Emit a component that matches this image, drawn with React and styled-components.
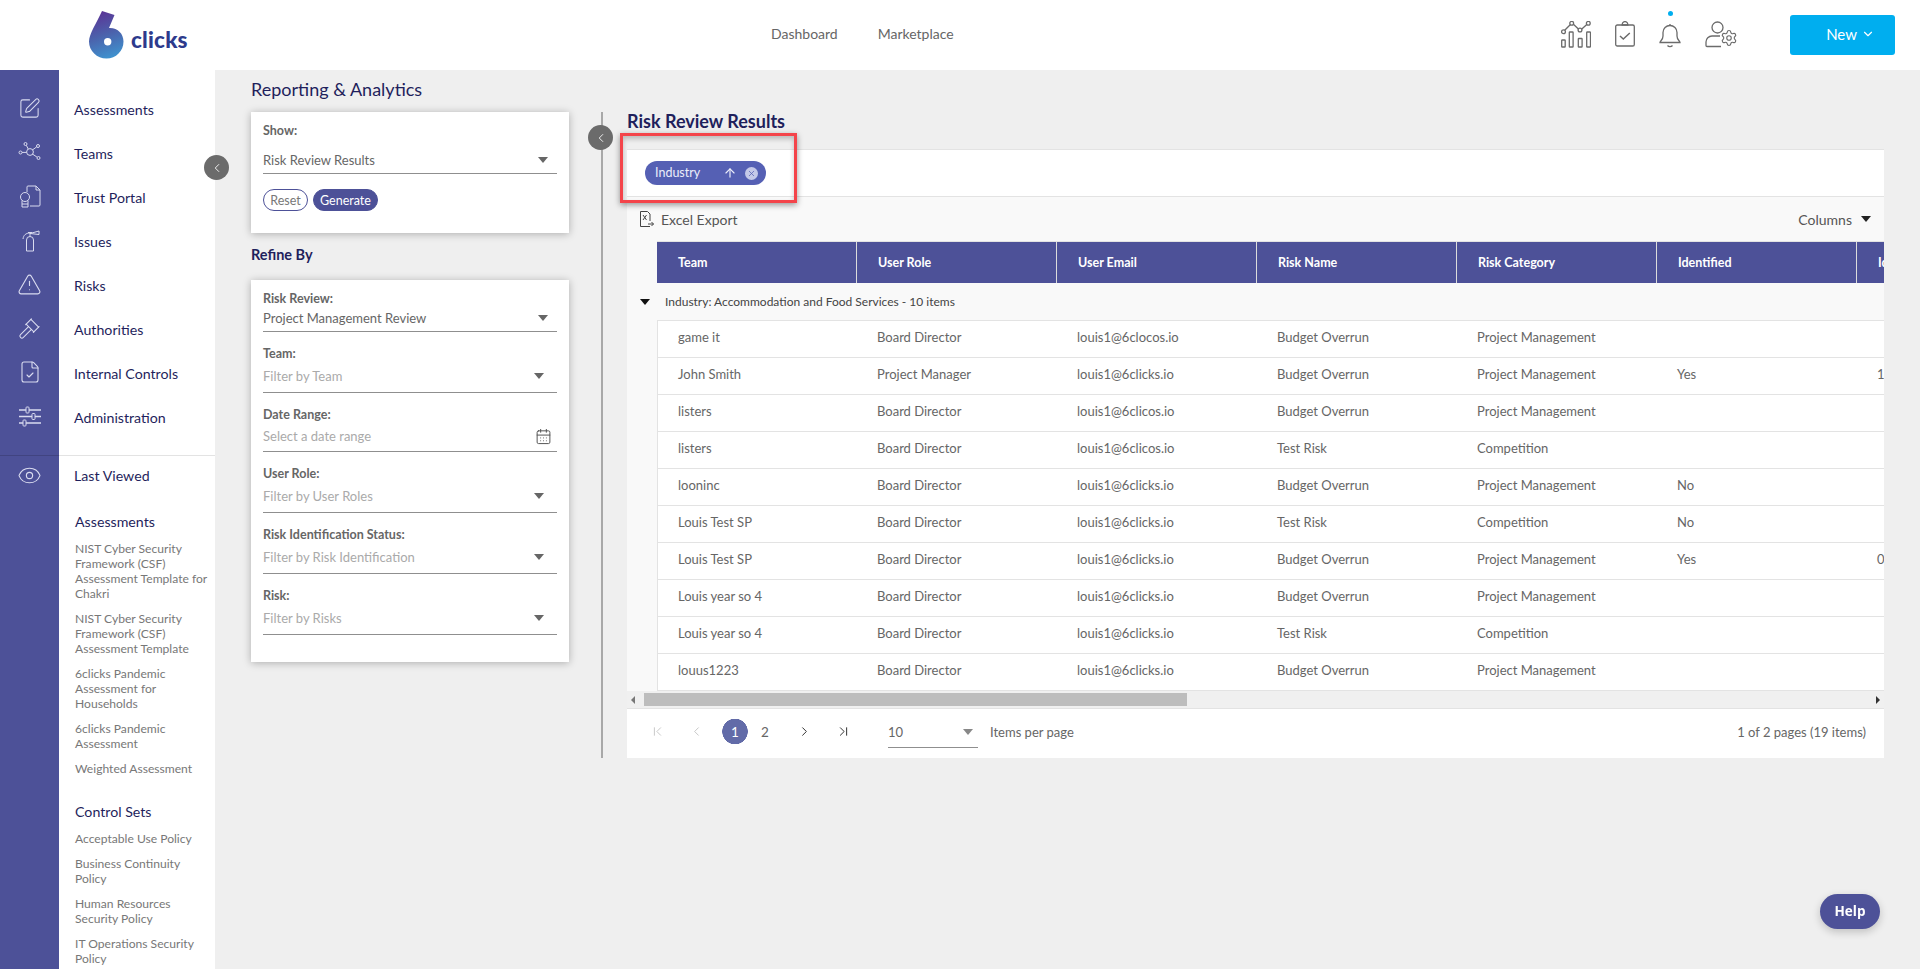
import React from 'react'
import styled, { createGlobalStyle } from 'styled-components'
import {
  SquarePen, TriangleAlert, Gavel, FileCheck, Eye,
  ChevronLeft, ChevronRight, ChevronFirst, ChevronLast, ChevronDown, CalendarDays,
  ArrowUp, X, Settings,
} from 'lucide-react'

const purple = '#4d5198'
const navy = '#1f1f5c'

const GlobalStyle = createGlobalStyle`
  html, body { margin: 0; padding: 0; }
  body { font-family: Lato, "Open Sans", sans-serif; background: #efefef; color: #666; }
  * { box-sizing: border-box; }
`

const Page = styled.div`
  height: 969px;
  overflow: hidden;
  display: flex;
  flex-direction: column;
`

const Header = styled.header`
  height: 70px;
  flex: none;
  background: #fff;
  display: flex;
  align-items: center;
  padding: 0 25px 0 89px;
`
const Logo = styled.div`
  width: 100px;
  display: flex;
  align-items: flex-end;
  gap: 7px;
  height: 48px;
  svg { flex: none; }
`
const LogoText = styled.span`
  font-weight: 900;
  font-size: 22.5px;
  line-height: 26px;
  letter-spacing: 0.2px;
  color: #2d3a8c;
  margin-bottom: 6px;
`
const TopNav = styled.nav`
  display: flex;
  gap: 40px;
  margin: 0 0 4px 582px;
  a { font-size: 14px; color: #666; }
`
const TopTools = styled.div`
  margin-left: auto;
  display: flex;
  align-items: center;
  gap: 24px;
  color: #6b6b6b;
  > svg { margin-top: -2px; }
`
const BellWrap = styled.div`
  position: relative;
  display: flex;
  &::before {
    content: '';
    position: absolute;
    left: 9px;
    top: -12px;
    width: 5px;
    height: 5px;
    border-radius: 50%;
    background: #00aeef;
  }
`
const NewButton = styled.button`
  width: 105px;
  height: 40px;
  margin-left: 28px;
  border: 0;
  border-radius: 3px;
  background: #00aeef;
  color: #fff;
  font: 400 15px Lato, sans-serif;
  display: flex;
  align-items: center;
  justify-content: flex-end;
  gap: 4px;
  padding: 0 20px 2px 0;
`

const Body = styled.div`
  flex: 1;
  display: flex;
  min-height: 0;
`

const Rail = styled.aside`
  width: 59px;
  flex: none;
  background: ${purple};
  color: #d9dbef;
  padding-top: 16px;
`
const RailSlot = styled.div`
  height: ${(p) => p.$h || 44}px;
  display: flex;
  align-items: center;
  justify-content: center;
`
const RailDivider = styled.div`
  height: 1px;
  margin-top: 17px;
  background: rgba(0, 0, 0, 0.15);
`

const NavPanel = styled.div`
  position: relative;
  width: 156px;
  flex: none;
  background: #fff;
  padding-top: 17px;
`
const NavItem = styled.a`
  height: 44px;
  display: flex;
  align-items: center;
  padding-left: 15px;
  font-size: 14.2px;
  color: ${navy};
`
const NavDivider = styled.div`
  height: 1px;
  margin-top: 16px;
  background: #e3e3e3;
`
const LastViewed = styled(NavItem)`
  height: 38px;
`
const RecentGroup = styled.div`
  padding: 0 6px 0 16px;
  margin-top: ${(p) => p.$top}px;
`
const RecentTitle = styled.div`
  font-size: 14.2px;
  line-height: 18px;
  color: ${navy};
  margin-bottom: 10px;
`
const RecentLink = styled.a`
  display: block;
  font-size: 12.1px;
  line-height: 15px;
  color: #777;
  margin-bottom: 10px;
`

const Collapse = styled.button`
  position: absolute;
  top: ${(p) => p.$top}px;
  ${(p) => (p.$side === 'nav' ? 'right: -14px;' : 'left: -13px;')}
  width: 25px;
  height: 25px;
  padding: 0;
  border: 0;
  border-radius: 50%;
  background: #6b6b6b;
  color: #fff;
  display: flex;
  align-items: center;
  justify-content: center;
  z-index: 2;
`

const Main = styled.main`
  flex: 1;
  min-width: 0;
  display: flex;
  align-items: flex-start;
`

const FilterColumn = styled.section`
  width: 318px;
  margin-left: 36px;
  flex: none;
`
const PageTitle = styled.h1`
  margin: 0;
  height: 42px;
  line-height: 38px;
  font-size: 18px;
  font-weight: 400;
  color: ${navy};
`
const Card = styled.div`
  background: #fff;
  padding: 10px 12px ${(p) => p.$bottom}px;
  box-shadow: 0 1px 8px rgba(0, 0, 0, 0.28);
`
const SubTitle = styled.h2`
  margin: 0;
  height: 47px;
  line-height: 44px;
  font-size: 14.5px;
  font-weight: 700;
  color: ${navy};
`
const Field = styled.div`
  margin-top: 13px;
  &:first-child { margin-top: 0; }
`
const FieldLabel = styled.div`
  height: 18px;
  line-height: 18px;
  font-size: 12.5px;
  font-weight: 700;
  color: #666;
`
const FieldInput = styled.div`
  height: ${(p) => p.$h}px;
  display: flex;
  align-items: center;
  justify-content: space-between;
  border-bottom: 1px solid #8f8f8f;
  font-size: 13px;
  color: ${(p) => (p.$empty ? '#aaa' : '#666')};
  padding: 0 ${(p) => (p.$empty ? 13 : 9)}px 3px 0;
  ${(p) => p.$gap && `margin-top: ${p.$gap}px;`}
`
const Caret = styled.span`
  width: 0;
  height: 0;
  border-left: 5.5px solid transparent;
  border-right: 5.5px solid transparent;
  border-top: 6px solid ${(p) => p.$color || '#666'};
`
const DateIcon = styled(CalendarDays)`
  margin-right: -8px;
  color: #555;
`
const ButtonRow = styled.div`
  display: flex;
  gap: 5px;
  margin-top: 15px;
`
const Pill = styled.button`
  height: 22px;
  width: ${(p) => p.$w}px;
  padding: 0;
  border-radius: 11px;
  border: 1px solid ${purple};
  background: ${(p) => (p.$solid ? purple : '#fff')};
  color: ${(p) => (p.$solid ? '#fff' : '#777')};
  font: 400 12.5px Lato, sans-serif;
`

const Splitter = styled.div`
  position: relative;
  width: 2px;
  height: 646px;
  flex: none;
  margin: 42px 24px 0 32px;
  background: #a8a8a8;
`

const ResultPanel = styled.section`
  width: 1257px;
  flex: none;
  margin-top: 38px;
`
const ResultTitle = styled.h2`
  margin: 0 0 13px;
  height: 28px;
  line-height: 27px;
  font-size: 18px;
  font-weight: 700;
  color: ${navy};
`
const GroupBar = styled.div`
  position: relative;
  height: 48px;
  background: #fff;
  border-top: 1px solid #e3e3e3;
  border-bottom: 1px solid #e3e3e3;
  display: flex;
  align-items: center;
  padding-left: 18px;
`
const GroupChip = styled.div`
  width: 121px;
  height: 24px;
  border-radius: 12px;
  background: #5560b4;
  color: #eceefa;
  display: flex;
  align-items: center;
  padding: 0 8px 0 10px;
  font-size: 12.5px;
  span { flex: 1; margin-top: -2px; }
`
const ChipClose = styled.i`
  width: 13px;
  height: 13px;
  margin-left: 8px;
  border-radius: 50%;
  background: #c5c9e8;
  color: #5560b4;
  display: flex;
  align-items: center;
  justify-content: center;
`
const Highlight = styled.div`
  position: absolute;
  left: -7px;
  top: -17px;
  width: 177px;
  height: 70px;
  border: 3.5px solid #f4444a;
  box-shadow: 0 2px 6px rgba(0, 0, 0, 0.4), inset 0 3px 5px rgba(0, 0, 0, 0.22);
  pointer-events: none;
`
const Toolbar = styled.div`
  height: 44px;
  background: #f9f9f9;
  display: flex;
  align-items: center;
  padding: 0 13px 0 13px;
  font-size: 14px;
  color: #555;
`
const ExportButton = styled.div`
  display: flex;
  align-items: center;
  gap: 7px;
`
const ColumnsButton = styled.div`
  margin-left: auto;
  display: flex;
  align-items: center;
  gap: 9px;
`
const GridWrap = styled.div`
  overflow: hidden;
  background: #f9f9f9;
`
const HeadRow = styled.div`
  display: flex;
  height: 42px;
  margin-left: 30px;
  background: ${purple};
  border-top: 1px solid #e3e3e3;
`
const HeadCell = styled.div`
  flex: 0 0 200px;
  padding-left: 21px;
  display: flex;
  align-items: center;
  font-size: 12.5px;
  font-weight: 700;
  color: #fff;
  border-right: 1px solid #dcdcdc;
`
const GroupRow = styled.div`
  height: 37px;
  display: flex;
  align-items: center;
  gap: 15px;
  padding-left: 13px;
  font-size: 12px;
  color: #444;
`
const BodyRow = styled.div`
  display: flex;
  height: 37px;
  margin-left: 30px;
  width: 1600px;
  background: #fff;
  border-top: 1px solid #e3e3e3;
  &:last-child { border-bottom: 1px solid #e3e3e3; height: 38px; }
  border-left: 1px solid #e3e3e3;
`
const BodyCell = styled.div`
  flex: 0 0 200px;
  padding: 0 0 5px 20px;
  display: flex;
  align-items: center;
  font-size: 13px;
  color: #666;
  white-space: nowrap;
  &:first-child { flex-basis: 199px; }
`
const Scrollbar = styled.div`
  height: 17px;
  background: #f0f0f0;
  display: flex;
  align-items: center;
  padding: 0 4px;
`
const ScrollThumb = styled.div`
  width: 543px;
  height: 13px;
  margin-left: 9px;
  background: #bdbdbd;
`
const ScrollArrow = styled.span`
  width: 0;
  height: 0;
  border-top: 4px solid transparent;
  border-bottom: 4px solid transparent;
  ${(p) => (p.$dir === 'left'
    ? 'border-right: 4px solid #777;'
    : 'border-left: 4px solid #333; margin-left: auto;')}
`
const Pager = styled.div`
  height: 50px;
  background: #fff;
  border-top: 1px solid #e3e3e3;
  display: flex;
  align-items: center;
  padding: 0 18px 4px 11px;
  font-size: 13px;
  color: #666;
`
const PagerIcon = styled.span`
  width: 39px;
  display: flex;
  justify-content: center;
  color: ${(p) => (p.$off ? '#bbb' : '#333')};
`
const PageNumbers = styled.div`
  display: flex;
  margin: 0 5px 0 4px;
`
const PageNumber = styled.span`
  width: 30px;
  height: 25px;
  display: flex;
  align-items: center;
  justify-content: center;
  font-size: 13.5px;
  ${(p) => p.$active && `
    background: radial-gradient(circle at center, #626ba8 12.5px, transparent 13px);
    color: #fff;
  `}
`
const PageSize = styled.div`
  width: 90px;
  height: 30px;
  margin: 3px 0 0 25px;
  padding: 0 5px 2px 0;
  display: flex;
  align-items: center;
  justify-content: space-between;
  border-bottom: 1px solid #8f8f8f;
  color: #666;
`
const PageSizeLabel = styled.span`
  margin-left: 12px;
`
const PageInfo = styled.span`
  margin-left: auto;
`
const HelpButton = styled.button`
  position: fixed;
  left: 1820px;
  top: 894px;
  width: 60px;
  height: 35px;
  border: 0;
  border-radius: 18px;
  padding: 0 0 2px;
  background: ${purple};
  color: #fff;
  font: 700 13.5px "Open Sans", sans-serif;
  box-shadow: 0 3px 8px rgba(0, 0, 0, 0.2);
`

const ChartIcon = () => (
  <svg width="30" height="27" viewBox="0 0 30 27" fill="none" stroke="currentColor" strokeWidth="1.3">
    <rect x=".7" y="19" width="3.5" height="7" rx=".6" />
    <rect x="8.300" y="11" width="3.800" height="15" rx=".6" />
    <rect x="17.300" y="17.500" width="3.800" height="8.500" rx=".6" />
    <rect x="25.700" y="11" width="3.800" height="15" rx=".6" />
    <path d="M3.700 9.300 9.200 3.700M12.400 3.200 17.400 8M20.800 8l5-4.600" />
    <circle cx="2.500" cy="10.700" r="1.900" />
    <circle cx="10.700" cy="2.300" r="1.900" />
    <circle cx="19" cy="9" r="1.900" />
    <circle cx="27.300" cy="2.300" r="1.900" />
  </svg>
)
const ClipboardIcon = () => (
  <svg width="20" height="26" viewBox="0 0 20 26" fill="none" stroke="currentColor" strokeWidth="1.3">
    <rect x=".7" y="4" width="18.600" height="21" rx="1.600" />
    <path d="M6.500 4h7M7.400 4a2.700 2.700 0 1 1 5.200 0" />
    <path d="m5 15 3.300 3 6.500-6" strokeWidth="1.500" />
  </svg>
)
const BellIcon = () => (
  <svg width="22" height="25" viewBox="0 0 22 25" fill="none" stroke="currentColor" strokeWidth="1.300">
    <path d="M1 19.500c0-1.600 3-2.400 3-6.500V9.500a7 7 0 0 1 14 0V13c0 4.100 3 4.900 3 6.500z" />
    <path d="M11 2.500V1M8.500 22.500a3.200 3.200 0 0 0 5 0" />
  </svg>
)
const UserGearIcon = () => (
  <svg width="33" height="27" viewBox="0 0 33 27" fill="none" stroke="currentColor" strokeWidth="1.300">
    <circle cx="12.500" cy="6.500" r="5.500" />
    <path d="M16 25.500H2a1 1 0 0 1-1-1V21a6 6 0 0 1 6-6h8" />
    <Settings x={15} y={8} width={18} height={18} strokeWidth={1.5} />
  </svg>
)
const NetworkIcon = () => (
  <svg width="24" height="24" viewBox="0 0 24 24" fill="none" stroke="currentColor" strokeWidth="1">
    <circle cx="12" cy="12" r="3.400" />
    <circle cx="7.500" cy="4" r="1.500" />
    <circle cx="20" cy="6" r="1.500" />
    <circle cx="2.500" cy="12.500" r="1.500" />
    <circle cx="20.500" cy="18" r="1.500" />
    <path d="m8.300 5.300 2 3.800M18.700 6.900l-4.200 3M4 12.400h4.600M18.900 17l-4.500-3" />
  </svg>
)
const CertificateIcon = () => (
  <svg width="24" height="24" viewBox="0 0 24 24" fill="none" stroke="currentColor" strokeWidth="1">
    <path d="M9 8V3a1 1 0 0 1 1-1h8l4 4v15a1 1 0 0 1-1 1h-9" />
    <path d="M18 2v4h4" />
    <circle cx="7" cy="13" r="4.500" />
    <path d="M4 16.500V23h6v-6.500M4 20h6" />
  </svg>
)
const ExtinguisherIcon = () => (
  <svg width="24" height="24" viewBox="0 0 24 24" fill="none" stroke="currentColor" strokeWidth="1">
    <path d="M8.500 23V12a3.500 3.500 0 0 1 7 0v11z" />
    <path d="M12 8.500V5" />
    <path d="M12 5.500 21 3v3.500L12 5.500" />
    <path d="M12 5c-4 0-6.500 2-7 6" />
    <path d="M10 4.500h4" />
  </svg>
)
const SlidersIcon = () => (
  <svg width="24" height="24" viewBox="0 0 24 24" fill="none" stroke="currentColor" strokeWidth="1">
    <path d="M1 6h7M11 6h12M1 12.500h13M17 12.500h6M1 19h4M8 19h15" strokeWidth="1.300" />
    <rect x="8" y="3" width="3" height="6" rx=".8" />
    <rect x="14" y="9.500" width="3" height="6" rx=".8" />
    <rect x="5" y="16" width="3" height="6" rx=".8" />
  </svg>
)
const ExcelIcon = () => (
  <svg width="14" height="17" viewBox="0 0 14 17" fill="none" stroke="#444" strokeWidth="1">
    <path d="M10 10V3L7.500.5H.5v15H10" />
    <path d="m3 4 3.500 5M6.500 4 3 9" />
    <path d="M8 13h5.500M11.500 11l2 2-2 2" />
  </svg>
)
const LogoMark = () => (
  <svg width="35" height="49" viewBox="0 0 35 49">
    <defs>
      <linearGradient id="logoFill" x1="0.35" y1="0" x2="0.6" y2="1">
        <stop offset="0" stopColor="#5b3496" />
        <stop offset="0.5" stopColor="#4b62ac" />
        <stop offset="1" stopColor="#3f93cf" />
      </linearGradient>
    </defs>
    <path
      fillRule="evenodd"
      fill="url(#logoFill)"
      d="M13 1 25.500 5 20 18c8.500-.5 14.500 5.500 14.500 13.500C34.500 41 27 48.500 17.500 48.500S0 41 0 31.500C0 24 7 14 13 1ZM18.700 28a3.700 3.700 0 1 0 0 7.400 3.700 3.700 0 0 0 0-7.400Z"
    />
  </svg>
)

const navItems = ['Assessments', 'Teams', 'Trust Portal', 'Issues', 'Risks', 'Authorities', 'Internal Controls', 'Administration']
const railIcons = [
  <SquarePen key="a" size={23} strokeWidth={1.1} />,
  <NetworkIcon key="b" />,
  <CertificateIcon key="c" />,
  <ExtinguisherIcon key="d" />,
  <TriangleAlert key="e" size={25} strokeWidth={1.1} />,
  <Gavel key="f" size={23} strokeWidth={1.1} />,
  <FileCheck key="g" size={24} strokeWidth={1.1} />,
  <SlidersIcon key="h" />,
]
const recentAssessments = [
  'NIST Cyber Security Framework (CSF) Assessment Template for Chakri',
  'NIST Cyber Security Framework (CSF) Assessment Template',
  '6clicks Pandemic Assessment for Households',
  '6clicks Pandemic Assessment',
  'Weighted Assessment',
]
const recentControls = ['Acceptable Use Policy', 'Business Continuity Policy', 'Human Resources Security Policy', 'IT Operations Security Policy']

const filters = [
  { label: 'Risk Review:', value: 'Project Management Review', h: 24 },
  { label: 'Team:', value: 'Filter by Team', empty: true, h: 30 },
  { label: 'Date Range:', value: 'Select a date range', empty: true, h: 28, date: true },
  { label: 'User Role:', value: 'Filter by User Roles', empty: true, h: 30 },
  { label: 'Risk Identification Status:', value: 'Filter by Risk Identification', empty: true, h: 30 },
  { label: 'Risk:', value: 'Filter by Risks', empty: true, h: 30 },
]

const columns = ['Team', 'User Role', 'User Email', 'Risk Name', 'Risk Category', 'Identified', 'Identified Date']
const pm = ['Budget Overrun', 'Project Management']
const tr = ['Test Risk', 'Competition']
const rows = [
  ['game it', 'Board Director', 'louis1@6clocos.io', ...pm, '', ''],
  ['John Smith', 'Project Manager', 'louis1@6clicks.io', ...pm, 'Yes', '12/08/2021'],
  ['listers', 'Board Director', 'louis1@6clicos.io', ...pm, '', ''],
  ['listers', 'Board Director', 'louis1@6clicos.io', ...tr, '', ''],
  ['looninc', 'Board Director', 'louis1@6clicks.io', ...pm, 'No', ''],
  ['Louis Test SP', 'Board Director', 'louis1@6clicks.io', ...tr, 'No', ''],
  ['Louis Test SP', 'Board Director', 'louis1@6clicks.io', ...pm, 'Yes', '05/11/2021'],
  ['Louis year so 4', 'Board Director', 'louis1@6clicks.io', ...pm, '', ''],
  ['Louis year so 4', 'Board Director', 'louis1@6clicks.io', ...tr, '', ''],
  ['louus1223', 'Board Director', 'louis1@6clicks.io', ...pm, '', ''],
]

export default function App() {
  return (
    <Page>
      <GlobalStyle />
      <Header>
        <Logo>
          <LogoMark />
          <LogoText>clicks</LogoText>
        </Logo>
        <TopNav>
          <a>Dashboard</a>
          <a>Marketplace</a>
        </TopNav>
        <TopTools>
          <ChartIcon />
          <ClipboardIcon />
          <BellWrap><BellIcon /></BellWrap>
          <UserGearIcon />
          <NewButton>New <ChevronDown size={14} strokeWidth={2} /></NewButton>
        </TopTools>
      </Header>
      <Body>
        <Rail>
          {railIcons.map((icon, i) => <RailSlot key={i}>{icon}</RailSlot>)}
          <RailDivider />
          <RailSlot $h={38}><Eye size={25} strokeWidth={1.1} /></RailSlot>
        </Rail>
        <NavPanel>
          {navItems.map((n) => <NavItem key={n}>{n}</NavItem>)}
          <NavDivider />
          <LastViewed>Last Viewed</LastViewed>
          <RecentGroup $top={19}>
            <RecentTitle>Assessments</RecentTitle>
            {recentAssessments.map((r) => <RecentLink key={r}>{r}</RecentLink>)}
          </RecentGroup>
          <RecentGroup $top={27}>
            <RecentTitle>Control Sets</RecentTitle>
            {recentControls.map((r) => <RecentLink key={r}>{r}</RecentLink>)}
          </RecentGroup>
          <Collapse $side="nav" $top={85}><ChevronLeft size={14} strokeWidth={1.5} /></Collapse>
        </NavPanel>
        <Main>
          <FilterColumn>
            <PageTitle>Reporting &amp; Analytics</PageTitle>
            <Card $bottom={22}>
              <FieldLabel>Show:</FieldLabel>
              <FieldInput $h={25} $gap={9}>Risk Review Results <Caret /></FieldInput>
              <ButtonRow>
                <Pill $w={45}>Reset</Pill>
                <Pill $w={65} $solid>Generate</Pill>
              </ButtonRow>
            </Card>
            <SubTitle>Refine By</SubTitle>
            <Card $bottom={27}>
              {filters.map((f) => (
                <Field key={f.label}>
                  <FieldLabel>{f.label}</FieldLabel>
                  <FieldInput $h={f.h} $empty={f.empty}>
                    {f.value}
                    {f.date ? <DateIcon size={17} strokeWidth={1.4} /> : <Caret />}
                  </FieldInput>
                </Field>
              ))}
            </Card>
          </FilterColumn>
          <Splitter>
            <Collapse $side="grid" $top={13}><ChevronLeft size={14} strokeWidth={1.5} /></Collapse>
          </Splitter>
          <ResultPanel>
            <ResultTitle>Risk Review Results</ResultTitle>
            <GroupBar>
              <GroupChip>
                <span>Industry</span>
                <ArrowUp size={14} strokeWidth={2} />
                <ChipClose><X size={9} strokeWidth={2} /></ChipClose>
              </GroupChip>
              <Highlight />
            </GroupBar>
            <Toolbar>
              <ExportButton><ExcelIcon /> Excel Export</ExportButton>
              <ColumnsButton>Columns <Caret $color="#222" /></ColumnsButton>
            </Toolbar>
            <GridWrap>
              <HeadRow>
                {columns.map((c) => <HeadCell key={c}>{c}</HeadCell>)}
              </HeadRow>
              <GroupRow>
                <Caret $color="#111" />
                Industry: Accommodation and Food Services - 10 items
              </GroupRow>
              {rows.map((row, i) => (
                <BodyRow key={i}>
                  {row.map((v, j) => <BodyCell key={j}>{v}</BodyCell>)}
                </BodyRow>
              ))}
            </GridWrap>
            <Scrollbar>
              <ScrollArrow $dir="left" />
              <ScrollThumb />
              <ScrollArrow $dir="right" />
            </Scrollbar>
            <Pager>
              <PagerIcon $off><ChevronFirst size={15} strokeWidth={1.3} /></PagerIcon>
              <PagerIcon $off><ChevronLeft size={15} strokeWidth={1.3} /></PagerIcon>
              <PageNumbers>
                <PageNumber $active>1</PageNumber>
                <PageNumber>2</PageNumber>
              </PageNumbers>
              <PagerIcon><ChevronRight size={15} strokeWidth={1.6} /></PagerIcon>
              <PagerIcon><ChevronLast size={15} strokeWidth={1.6} /></PagerIcon>
              <PageSize>10 <Caret $color="#888" /></PageSize>
              <PageSizeLabel>Items per page</PageSizeLabel>
              <PageInfo>1 of 2 pages (19 items)</PageInfo>
            </Pager>
          </ResultPanel>
        </Main>
      </Body>
      <HelpButton>Help</HelpButton>
    </Page>
  )
}
